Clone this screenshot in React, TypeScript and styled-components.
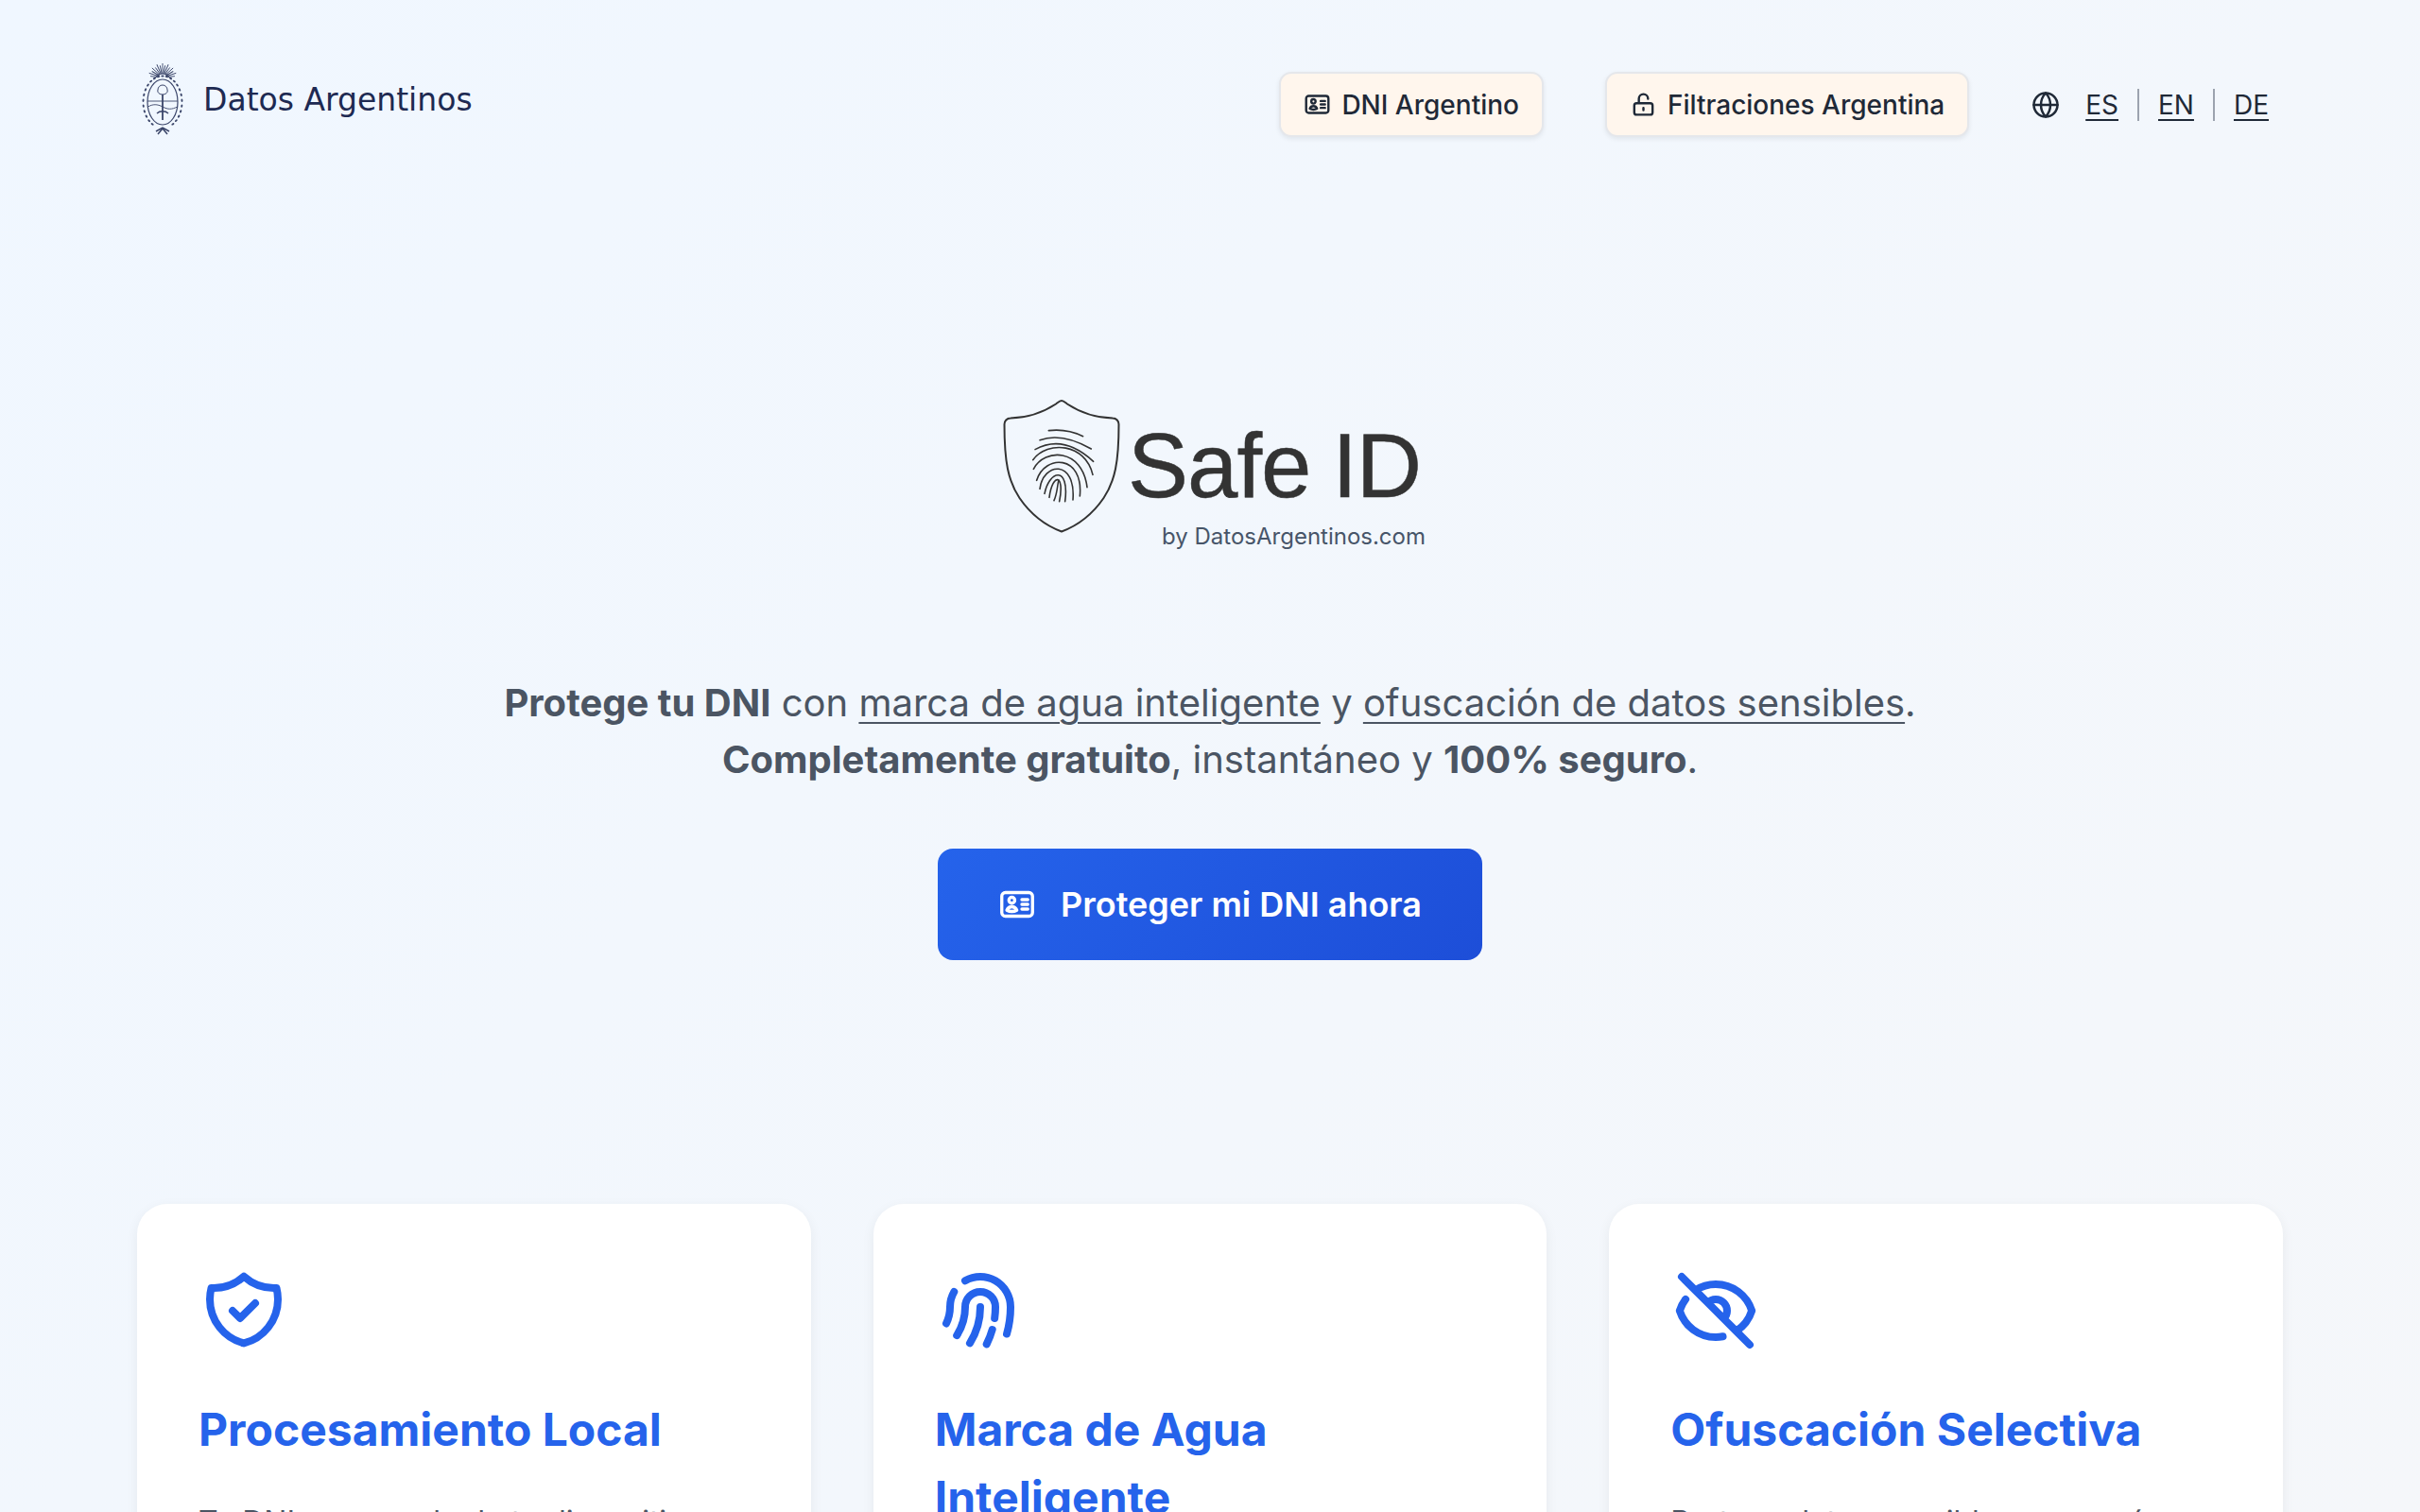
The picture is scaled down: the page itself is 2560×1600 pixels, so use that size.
import React from "react";
import styled, { createGlobalStyle } from "styled-components";
import { Globe } from "lucide-react";
import {
  HiOutlineEyeOff,
  HiOutlineFingerPrint,
  HiOutlineLockOpen,
  HiOutlineShieldCheck,
} from "react-icons/hi";
import { HiOutlineIdentification } from "react-icons/hi2";

const GlobalStyle = createGlobalStyle`
  html, body {
    margin: 0;
    padding: 0;
  }
  body {
    font-family: Inter, "Noto Sans", sans-serif;
    color: #1f2937;
  }
  * {
    box-sizing: border-box;
  }
`;

const Page = styled.div`
  height: 1600px;
  overflow: hidden;
  background: linear-gradient(135deg, #f0f7ff 0%, #f5f7fa 100%);
  padding: 0 145px;
`;

const Header = styled.header`
  display: flex;
  align-items: flex-start;
  justify-content: space-between;
  height: 274px;
  padding-top: 65px;
`;

const Brand = styled.a`
  display: flex;
  align-items: center;
  gap: 20px;
  padding-left: 2px;
  height: 78px;
  font-family: "DejaVu Sans", Verdana, sans-serif;
  font-size: 33px;
  color: #1e2a52;
`;

const BrandText = styled.span`
  position: relative;
  top: 1px;
`;

const Nav = styled.nav`
  display: flex;
  align-items: center;
  padding-top: 11px;
  padding-right: 15px;
`;

const NavButton = styled.a`
  display: flex;
  align-items: center;
  gap: 11px;
  height: 69px;
  padding: 0 24px;
  margin-right: 65px;
  background: #fff6ed;
  border: 2px solid #e5e7eb;
  border-radius: 13px;
  box-shadow: 0 2px 5px rgba(15, 23, 42, 0.08);
  font-size: 28px;
  font-weight: 500;
  color: #1f2937;
  svg {
    font-size: 29px;
  }
`;

const LangGroup = styled.div`
  display: flex;
  align-items: center;
  margin-left: 1px;
  font-size: 28px;
  color: #1f2937;
  svg {
    width: 30px;
    height: 30px;
    margin-right: 27px;
  }
`;

const LangLink = styled.a`
  text-decoration: underline;
  text-underline-offset: 5px;
`;

const LangDivider = styled.span`
  width: 2px;
  height: 34px;
  margin: 0 20px;
  background: #9ca3af;
`;

const Hero = styled.section`
  display: flex;
  flex-direction: column;
  align-items: center;
  height: 1000px;
`;

const LogoBlock = styled.div`
  display: flex;
  flex-direction: column;
  margin-top: 148px;
  width: 456px;
  padding-left: 8px;
`;

const LogoRow = styled.div`
  display: flex;
  align-items: flex-start;
  height: 110px;
`;

const LogoWord = styled.span`
  font-family: "Liberation Sans", Arial, sans-serif;
  font-size: 96px;
  line-height: 110px;
  letter-spacing: -1px;
  word-spacing: -3px;
  -webkit-text-stroke: 0.5px #333333;
  color: #333333;
  margin-left: 7px;
  margin-top: 16px;
`;

const LogoSub = styled.span`
  align-self: flex-end;
  margin-top: 21px;
  font-size: 24px;
  color: #475569;
`;

const Lead = styled.p`
  margin: 132px 0 0;
  font-size: 40px;
  line-height: 60px;
  color: #4b5563;
  text-align: center;
  a {
    text-decoration: underline;
    text-underline-offset: 6px;
    text-decoration-thickness: 2px;
  }
  strong {
    font-weight: 700;
  }
`;

const Cta = styled.a`
  display: flex;
  align-items: center;
  justify-content: center;
  gap: 26px;
  width: 576px;
  height: 118px;
  margin-top: 64px;
  border-radius: 16px;
  background: linear-gradient(135deg, #2563eb, #1d4ed8);
  color: #ffffff;
  font-size: 36px;
  font-weight: 600;
  svg {
    font-size: 40px;
  }
`;

const Cards = styled.section`
  display: grid;
  grid-template-columns: repeat(3, 1fr);
  gap: 66px;
`;

const Card = styled.article`
  height: 700px;
  padding: 65px;
  background: #ffffff;
  border-radius: 32px;
  box-shadow: 0 4px 14px rgba(15, 23, 42, 0.06);
`;

const CardIcon = styled.div`
  height: 96px;
  margin-bottom: 42px;
  color: #2563eb;
  svg {
    display: block;
    font-size: 96px;
  }
`;

const CardTitle = styled.h3`
  margin: 0 0 35px;
  font-size: 48px;
  line-height: 72px;
  font-weight: 700;
  color: #2563eb;
`;

const CardText = styled.p`
  margin: 0;
  font-size: 32px;
  line-height: 54px;
  color: #4b5563;
`;

const rayAngles = [-84, -72, -60, -48, -36, -24, -12, 0, 12, 24, 36, 48, 60, 72, 84];
const leafAngles = Array.from({ length: 25 }, (_, i) => -148 + i * 12.33);

const ArgentineCrest = () => (
  <svg width="48" height="78" viewBox="0 0 48 78" fill="none" stroke="#3a4569">
    <g strokeWidth="0.9">
      {rayAngles.map((a) => (
        <line key={a} x1="25" y1="13" x2="25" y2={a % 24 === 0 ? 2 : 4} transform={`rotate(${a} 25 17)`} />
      ))}
    </g>
    <path d="M18 17a7 4 0 0 1 14 0" strokeWidth="1" />
    <ellipse cx="25" cy="43" rx="16" ry="24" strokeWidth="1.200" />
    <path d="M9 42h32M9.500 48c5-3 10-3 15.500 0s10 3 15.500 0" strokeWidth="0.900" />
    <path d="M25 35v27" strokeWidth="1.800" />
    <path d="M20 30a5 5 0 0 1 10 0c1 3-2 5-5 5s-6-2-5-5Z" strokeWidth="1" />
    <path d="M19 55c3-3 9-3 12 0" strokeWidth="1.400" />
    {leafAngles.map((a) => {
      const rad = (a * Math.PI) / 180;
      const x = 25 + 20.500 * Math.sin(rad);
      const y = 43 - 27.500 * Math.cos(rad);
      return (
        <ellipse
          key={a}
          cx={x}
          cy={y}
          rx="1.700"
          ry="1"
          fill="#3a4569"
          stroke="none"
          transform={`rotate(${a} ${x} ${y})`}
        />
      );
    })}
    <path d="M18 74l7-4 7 4M20 77l5-6 5 6" strokeWidth="1.500" />
  </svg>
);

const SafeShield = () => (
  <svg width="126" height="144" viewBox="0 0 126 144" fill="none" stroke="#333333">
    <path
      d="M63 2c-2 0-4 2-6 3.500C44 14 30 20 9 20.500c-4 0-6.500 3-6.500 6.500 0 40 4 60 16 78 11 16 27 29 44.500 35.500 17.500-6.500 33.500-19.500 44.500-35.500 12-18 16-38 16-78 0-3.500-2.500-6.500-6.500-6.500C96 20 82 14 69 5.500 67 4 65 2 63 2Z"
      strokeWidth="2"
    />
    <g strokeWidth="4.800" strokeLinecap="round" transform="translate(-5 -3) scale(0.3333)">
      <path d="M163 110Q220 103 272 128" />
      <path d="M135 140Q205 115 298 168" />
      <path d="M120 170Q210 120 305 208" />
      <path d="M113 203C160 140 280 150 303 250" />
      <path d="M115 232C150 165 270 165 285 290" />
      <path d="M125 268C150 185 275 185 262 318" />
      <path d="M135 295C145 210 250 200 240 330" />
      <path d="M150 310C165 235 230 220 215 335" />
      <path d="M165 322C175 245 215 245 197 335" />
      <path d="M180 332C192 305 190 280 195 268" />
    </g>
  </svg>
);

export default function App() {
  return (
    <>
      <GlobalStyle />
      <Page>
        <Header>
          <Brand>
            <ArgentineCrest />
            <BrandText>Datos Argentinos</BrandText>
          </Brand>
          <Nav>
            <NavButton>
              <HiOutlineIdentification strokeWidth={2} />
              DNI Argentino
            </NavButton>
            <NavButton>
              <HiOutlineLockOpen />
              Filtraciones Argentina
            </NavButton>
            <LangGroup>
              <Globe strokeWidth={2} />
              <LangLink>ES</LangLink>
              <LangDivider />
              <LangLink>EN</LangLink>
              <LangDivider />
              <LangLink>DE</LangLink>
            </LangGroup>
          </Nav>
        </Header>
        <Hero>
          <LogoBlock>
            <LogoRow>
              <SafeShield />
              <LogoWord>Safe ID</LogoWord>
            </LogoRow>
            <LogoSub>by DatosArgentinos.com</LogoSub>
          </LogoBlock>
          <Lead>
            <strong>Protege tu DNI</strong> con <a>marca de agua inteligente</a> y{" "}
            <a>ofuscación de datos sensibles</a>.
            <br />
            <strong>Completamente gratuito</strong>, instantáneo y <strong>100% seguro</strong>.
          </Lead>
          <Cta>
            <HiOutlineIdentification strokeWidth={2} />
            Proteger mi DNI ahora
          </Cta>
        </Hero>
        <Cards>
          <Card>
            <CardIcon>
              <HiOutlineShieldCheck />
            </CardIcon>
            <CardTitle>Procesamiento Local</CardTitle>
            <CardText>Tu DNI nunca sale de tu dispositivo</CardText>
          </Card>
          <Card>
            <CardIcon>
              <HiOutlineFingerPrint />
            </CardIcon>
            <CardTitle>Marca de Agua Inteligente</CardTitle>
            <CardText>Añade una marca de agua personalizada</CardText>
          </Card>
          <Card>
            <CardIcon>
              <HiOutlineEyeOff />
            </CardIcon>
            <CardTitle>Ofuscación Selectiva</CardTitle>
            <CardText>Protege datos sensibles como número de trámite</CardText>
          </Card>
        </Cards>
      </Page>
    </>
  );
}
